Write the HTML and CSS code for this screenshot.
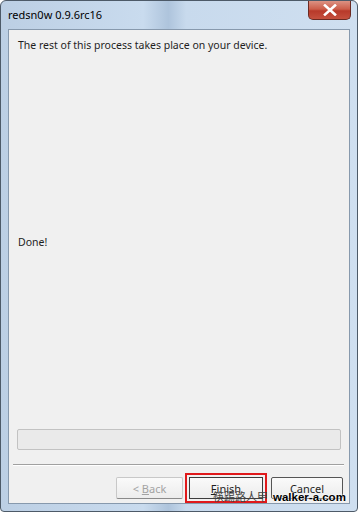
FILE: index.html
```html
<!DOCTYPE html>
<html lang="en">
<head>
    <meta charset="UTF-8">
    <title>redsn0w 0.9.6rc16</title>
    <link rel="stylesheet" href="styles.css">
</head>
<body>

<div class="window">
    <div class="titlebar">
        <span class="title">redsn0w 0.9.6rc16</span>
        <span class="close">
            <svg width="16" height="12" viewBox="0 0 16 12">
                <path d="M3 1.5 L13 10.5 M13 1.5 L3 10.5" stroke="#fff" stroke-width="2.6" stroke-linecap="square"/>
            </svg>
        </span>
    </div>

    <div class="client">
        <p class="message">The rest of this process takes place on your device.</p>
        <p class="done">Done!</p>

        <div class="progress"></div>
        <div class="separator"></div>

        <div class="buttons">
            <button class="btn back" disabled>&lt; <u>B</u>ack</button>
            <button class="btn finish"><u>F</u>inish</button>
            <button class="btn cancel">Cancel</button>
        </div>
    </div>

    <div class="watermark">
        <span class="wm-cn">筷踢路人甲</span>
        <span class="wm-en">walker-a.com</span>
    </div>
</div>

</body>
</html>
```

FILE: styles.css
```css
body {
    margin: 0;
    font-family: 'Noto Sans', 'Open Sans', sans-serif;
    font-size: 10.5px;
    color: #1e1e1e;
}
.window {
    position: relative;
    box-sizing: border-box;
    width: 358px;
    height: 512px;
    border: 1px solid #4d5a68;
    border-radius: 6px 6px 4px 4px;
    padding: 0 7px 7px 7px;
    background: linear-gradient(to right, #bccfe4 0%, #c9dbee 40%, #aec4dc 47%, #c8daed 52%, #cfdff0 100%);
    display: flex;
    flex-direction: column;
}
.titlebar {
    height: 28px;
    display: flex;
    justify-content: space-between;
    align-items: flex-start;
}
.title {
    margin-top: 6px;
    font-size: 11px;
    color: #000;
}
.close {
    width: 41px;
    height: 18px;
    margin-right: -1px;
    border: 1px solid #6b2a22;
    border-top: none;
    border-radius: 0 0 5px 5px;
    background: linear-gradient(to bottom, #dc9283 0%, #cc5e4a 45%, #b8392a 55%, #c5503e 100%);
    display: flex;
    align-items: center;
    justify-content: center;
}
.client {
    flex: 1;
    border: 1px solid #8799ad;
    background: #f0f0f0;
    display: flex;
    flex-direction: column;
    padding: 0 6px 0 9px;
}
.message {
    margin: 8px 0 0 0;
    line-height: 14px;
}
.done {
    margin: 183px 0 0 0;
    line-height: 14px;
}
.progress {
    margin: 180px 0 0 -1px;
    width: 322px;
    height: 19px;
    border: 1px solid #c2c2c2;
    border-radius: 2px;
    background: #eaeaea;
}
.separator {
    margin: 14px 0 0 -5px;
    width: 331px;
    border-top: 1px solid #a0a0a0;
    border-bottom: 1px solid #fff;
}
.buttons {
    margin-top: 11px;
    display: flex;
    justify-content: flex-end;
}
.btn {
    height: 22px;
    padding: 0;
    font-family: 'Noto Sans', 'Open Sans', sans-serif;
    font-size: 11px;
    color: #1e1e1e;
    border: 1px solid #707070;
    border-radius: 2px;
    background: linear-gradient(to bottom, #fafafa, #ececec);
}
.back {
    width: 67px;
    color: #a3a3a3;
    border-color: #c8c8c8;
    border-bottom-color: #8a8a8a;
}
.finish {
    width: 74px;
    margin-left: 6px;
    border-color: #3c3c3c;
    border-radius: 0;
    outline: 2px solid #e0191b;
    outline-offset: 2px;
}
.cancel {
    width: 72px;
    margin-left: 8px;
    border-color: #555;
}
.watermark {
    position: absolute;
    left: 212px;
    top: 487px;
    display: flex;
    align-items: baseline;
    gap: 5px;
}
.wm-cn {
    font-family: 'Noto Sans CJK TC', sans-serif;
    font-size: 11px;
    color: #444;
}
.wm-en {
    font-family: 'Liberation Sans', sans-serif;
    font-weight: bold;
    font-size: 11.5px;
    color: #000;
    text-shadow: 0 0 2px #fff, 0 0 2px #fff;
}
```
